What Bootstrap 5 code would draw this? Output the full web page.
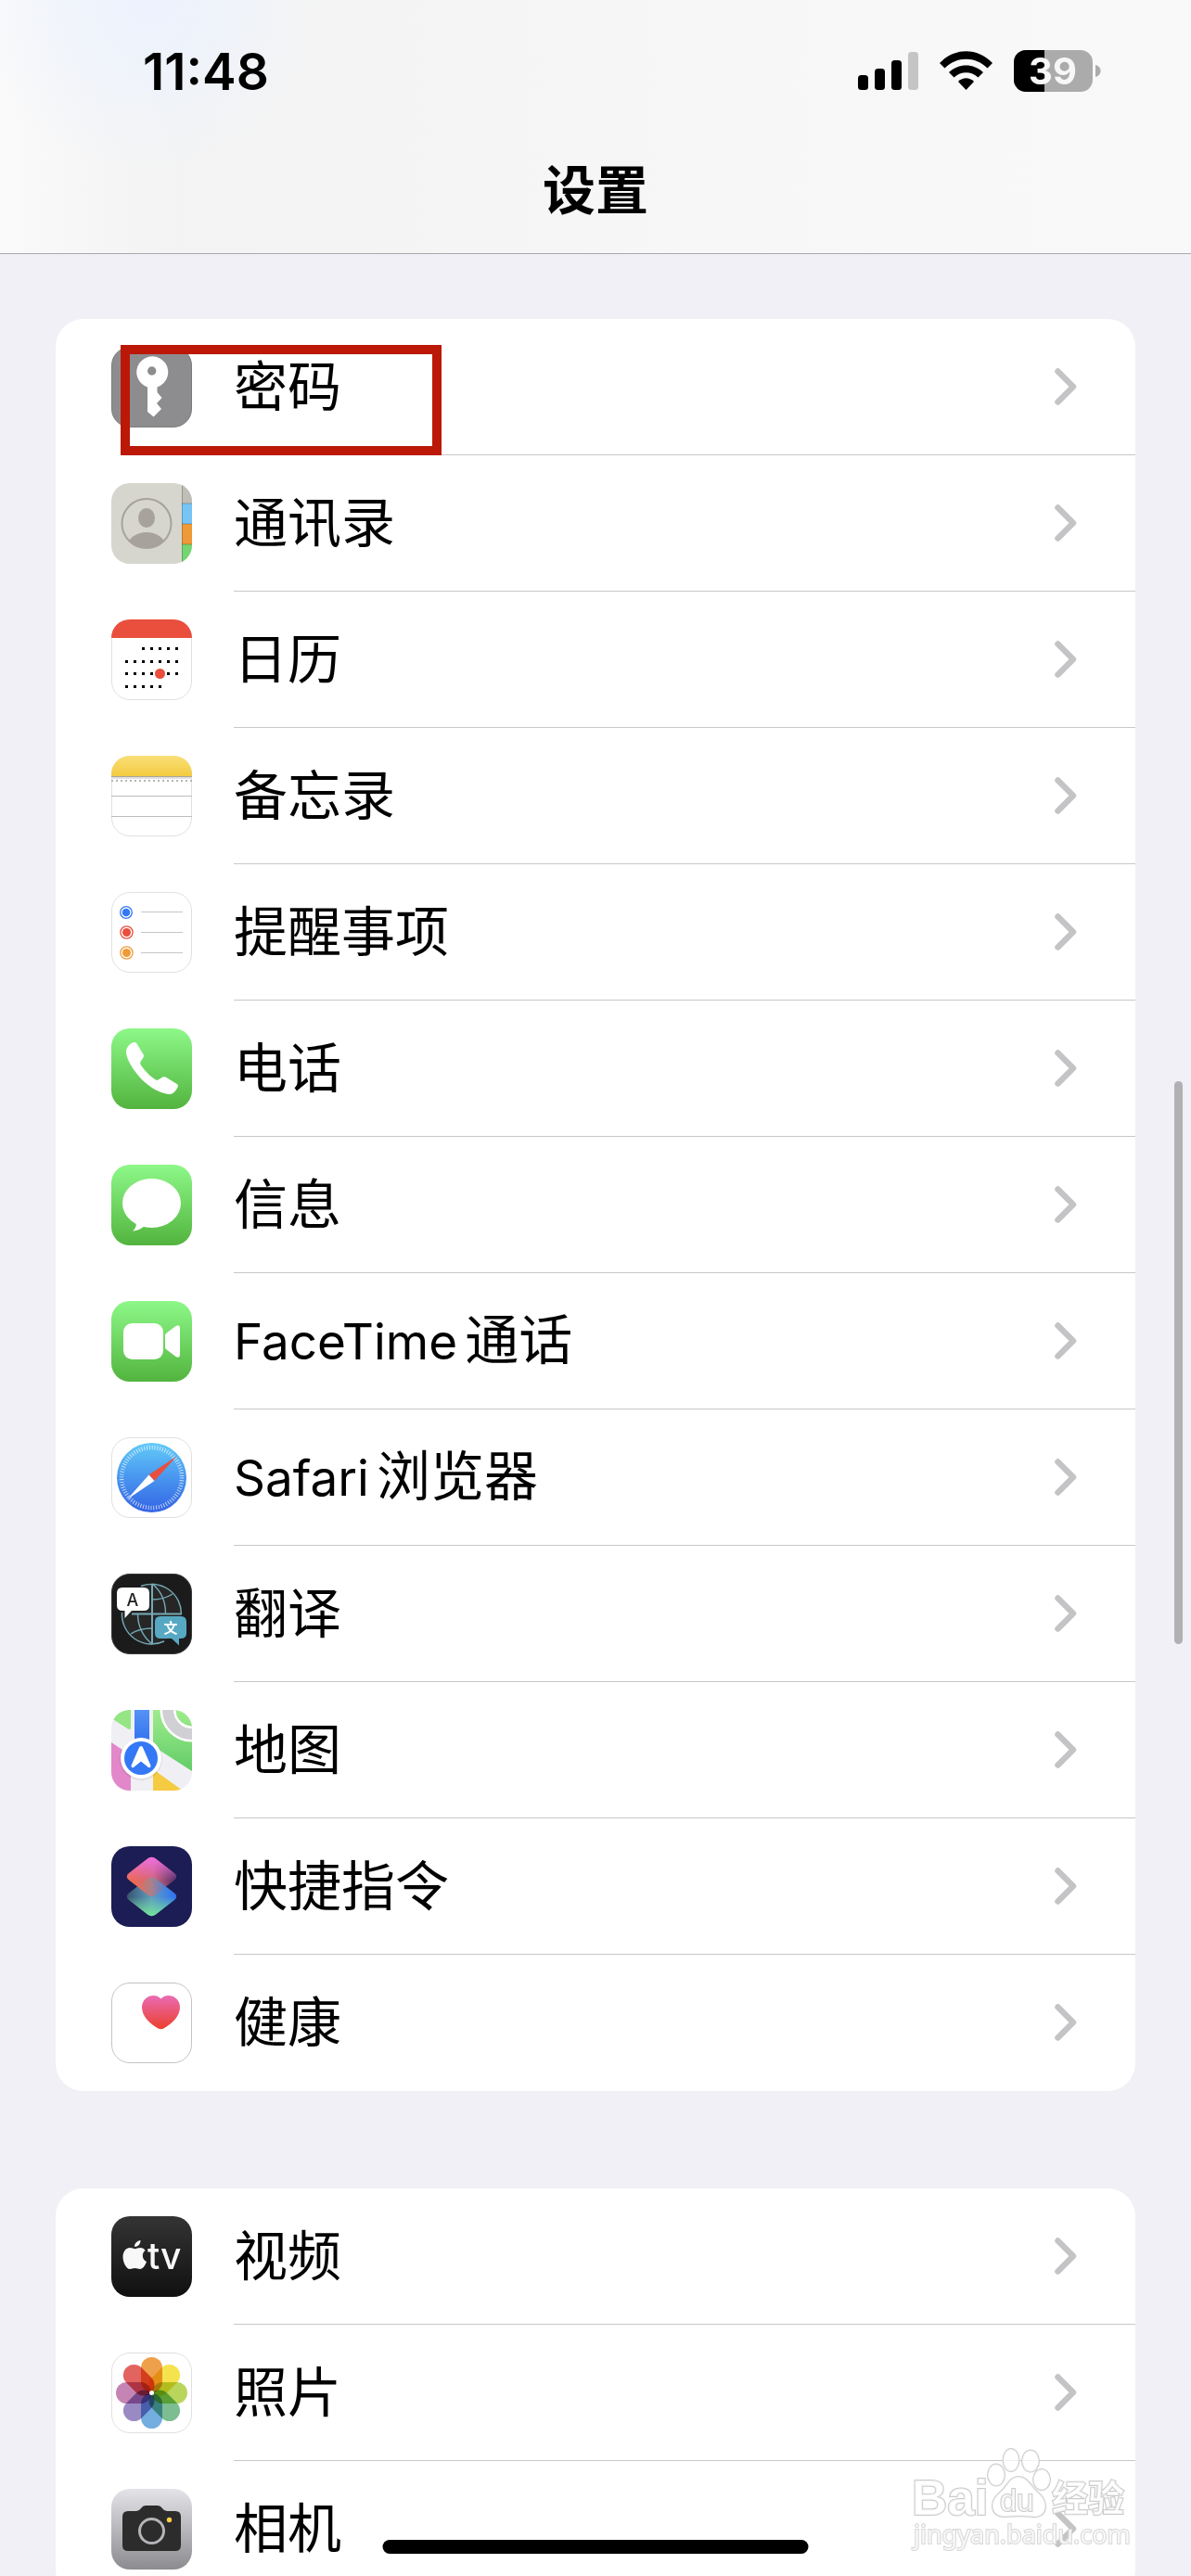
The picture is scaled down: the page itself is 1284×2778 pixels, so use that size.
<!DOCTYPE html>
<html lang="zh-CN">
<head>
<meta charset="utf-8">
<meta name="viewport" content="width=device-width, initial-scale=1">
<title>设置</title>
<link href="https://cdn.jsdelivr.net/npm/bootstrap@5.3.0/dist/css/bootstrap.min.css" rel="stylesheet">
<style>
  body { font-family: Inter, "Noto Sans CJK SC", sans-serif; background: #f0f0f6; color: #000; }
  .top-area { background: radial-gradient(circle 190px at 160px 0, #ecf2fe, rgba(238,243,252,0) 100%), linear-gradient(90deg, #fafafa 0, #f3f3f3 190px, #f7f7f7 760px, #f9f9f9 100%); border-bottom: 1px solid #a9a9ab; }
  .status-row { height: 154px; padding: 0 97px 0 154px; }
  .clock { font-size: 55px; line-height: 64px; font-weight: 600; }
  .page-title { font-size: 57px; line-height: 104px; font-weight: 700; padding-bottom: 15px; }
  .page-body { padding: 70px 60px 0; }
  .settings-card { border-radius: 30px; margin-bottom: 105px; overflow: hidden; background: #fff; }
  .settings-row { height: 147px; padding-left: 60px; color: #000; }
  .settings-row svg.app { width: 87px; height: 87px; margin-right: 45px; }
  .row-main { height: 147px; border-bottom: 1px solid #c8c8ca; padding-right: 63px; font-size: 58px; line-height: 80px; }
  .settings-row:last-child .row-main { border-bottom-color: transparent; }
  .latin { font-size: 53px; margin-right: 8px; }
  .scroll-thumb { right: 9px; top: 1166px; width: 9px; height: 607px; border-radius: 5px; background: #b1b1b3; }
  .home-bar { bottom: 24px; width: 459px; height: 15px; border-radius: 8px; background: #000; }
  .frame-note { left: 130px; top: 372px; width: 346px; height: 119px; border: 10px solid #bb1807; }
  .watermark { right: 64px; bottom: 20px; width: 240px; height: 124px; }
</style>
</head>
<body>
<svg width="0" height="0" class="position-absolute" aria-hidden="true">
  <defs>
    <linearGradient id="green" x1="0" y1="0" x2="0" y2="1"><stop offset="0" stop-color="#8df888"/><stop offset="1" stop-color="#52b43e"/></linearGradient>
    <clipPath id="tile"><rect width="87" height="87" rx="20"/></clipPath>
    <symbol id="chev" viewBox="0 0 24 40"><path d="M3.500 3.500L20 20L3.500 36.500" fill="none" stroke="#c4c4c6" stroke-width="6.500" stroke-linecap="round" stroke-linejoin="round"/></symbol>
  </defs>
</svg>

<div class="vh-100 d-flex flex-column overflow-hidden position-relative">
  <header class="top-area flex-shrink-0">
    <div class="status-row d-flex align-items-center justify-content-between">
      <span class="clock">11:48</span>
      <svg width="262" height="46" viewBox="0 0 262 46" aria-hidden="true">
        <g><rect x="0" y="27" width="11" height="16" rx="3.500"/><rect x="18" y="20" width="11" height="23" rx="3.500"/><rect x="36" y="11" width="11" height="32" rx="3.500"/><rect x="54" y="2" width="11" height="41" rx="3.500" fill="#c5c5c5"/></g>
        <path d="M88 14C104-3 129-3 145 14L139.500 19.500C126.500 6.500 106.500 6.500 93.500 19.500Z"/>
        <path d="M98 24C108.500 14 124.500 14 135 24L129.500 29.500C122 22.500 111 22.500 103.500 29.500Z"/>
        <path d="M108 34C113 29 120 29 125 34L116.500 43Z"/>
        <clipPath id="batt"><rect x="168" y="0" width="85" height="45" rx="13"/></clipPath>
        <g clip-path="url(#batt)"><rect x="168" width="85" height="45" fill="#ababab"/><rect x="168" width="33" height="45" fill="#000"/></g>
        <path d="M256 16C263.500 18 263.500 27 256 29Z" fill="#ababab"/>
        <text x="210" y="37" text-anchor="middle" font-family="Inter, sans-serif" font-weight="700" font-size="40" fill="#f7f7f7">39</text>
      </svg>
    </div>
    <h1 class="page-title text-center m-0">设置</h1>
  </header>

  <main class="page-body flex-grow-1 overflow-hidden">
    <nav class="settings-card" aria-label="应用设置">
      <a href="#" class="settings-row d-flex align-items-center text-decoration-none">
        <svg class="app flex-shrink-0" viewBox="0 0 87 87"><rect x=".5" y=".5" width="86" height="86" rx="19.500" fill="#8d8d90" stroke="#7c7c7f"/><path d="M39 44V70L45.500 75.500L54 67L49 61L54.500 55L49.500 49V43.500A17 17 0 1 0 39 43.500Z" fill="#fff"/><circle cx="43.700" cy="26" r="4.700" fill="#8d8d90"/></svg>
        <span class="row-main flex-grow-1 d-flex align-items-center justify-content-between"><span>密码</span><svg width="24" height="40"><use href="#chev"/></svg></span>
      </a>
      <a href="#" class="settings-row d-flex align-items-center text-decoration-none">
        <svg class="app flex-shrink-0" viewBox="0 0 87 87"><g clip-path="url(#tile)"><rect width="87" height="87" fill="#d6d6ce"/><rect x="76" width="11" height="22" fill="#bfbfb7"/><rect x="76" y="22" width="11" height="22" fill="#77c4f5"/><rect x="76" y="44" width="11" height="22" fill="#ee9a38"/><rect x="76" y="66" width="11" height="21" fill="#75d572"/><path d="M76 22H87M76 44H87M76 66H87M76.500 0V87" stroke="#000" stroke-opacity=".22"/></g><clipPath id="cc"><circle cx="38" cy="43.500" r="26.500"/></clipPath><circle cx="38" cy="43.500" r="26.500" fill="none" stroke="#a7a29c" stroke-width="2"/><ellipse cx="38" cy="37.500" rx="9" ry="10.500" fill="#a7a29c"/><ellipse cx="38" cy="69" rx="21" ry="16" fill="#a7a29c" clip-path="url(#cc)"/></svg>
        <span class="row-main flex-grow-1 d-flex align-items-center justify-content-between"><span>通讯录</span><svg width="24" height="40"><use href="#chev"/></svg></span>
      </a>
      <a href="#" class="settings-row d-flex align-items-center text-decoration-none">
        <svg class="app flex-shrink-0" viewBox="0 0 87 87"><rect x=".5" y=".5" width="86" height="86" rx="19.500" fill="#fff" stroke="#e0e0e0"/><rect width="87" height="20" fill="#ea4e3d" clip-path="url(#tile)"/><g stroke="#000" stroke-width="3" stroke-dasharray="3 6"><path d="M33 31.500H72M15 45.500H72M15 58.500H72M15 72.500H54"/></g><circle cx="52.500" cy="58.500" r="5.500" fill="#ea4e3d"/></svg>
        <span class="row-main flex-grow-1 d-flex align-items-center justify-content-between"><span>日历</span><svg width="24" height="40"><use href="#chev"/></svg></span>
      </a>
      <a href="#" class="settings-row d-flex align-items-center text-decoration-none">
        <svg class="app flex-shrink-0" viewBox="0 0 87 87"><linearGradient id="yel" x1="0" y1="0" x2="0" y2="1"><stop offset="0" stop-color="#f9df78"/><stop offset="1" stop-color="#f4cb40"/></linearGradient><rect x=".5" y=".5" width="86" height="86" rx="19.500" fill="#fff" stroke="#e0e0e0"/><rect width="87" height="22" fill="url(#yel)" clip-path="url(#tile)"/><path d="M0 22.500H87" stroke="#aaa69a"/><path d="M0 24H87" stroke="#e0e0e0" stroke-width="2"/><path d="M0 27H87" stroke="#b4b4b4" stroke-width="2" stroke-dasharray="2 3"/><path d="M0 43.500H87M0 65.500H87" stroke="#bdbdbd"/></svg>
        <span class="row-main flex-grow-1 d-flex align-items-center justify-content-between"><span>备忘录</span><svg width="24" height="40"><use href="#chev"/></svg></span>
      </a>
      <a href="#" class="settings-row d-flex align-items-center text-decoration-none">
        <svg class="app flex-shrink-0" viewBox="0 0 87 87"><rect x=".5" y=".5" width="86" height="86" rx="19.500" fill="#fff" stroke="#e0e0e0"/><path d="M32 21.500H77M32 43.500H77M32 65.500H77" stroke="#c6c6c6"/><g fill="none" stroke-width="1.300"><circle cx="16" cy="22" r="6.300" stroke="#3478f6"/><circle cx="16.500" cy="43.500" r="6.600" stroke="#ea4e3d"/><circle cx="16.500" cy="65.500" r="6.600" stroke="#f09a37"/></g><circle cx="16" cy="22" r="4.300" fill="#3478f6"/><circle cx="16.500" cy="43.500" r="4.500" fill="#ea4e3d"/><circle cx="16.500" cy="65.500" r="4.500" fill="#f09a37"/></svg>
        <span class="row-main flex-grow-1 d-flex align-items-center justify-content-between"><span>提醒事项</span><svg width="24" height="40"><use href="#chev"/></svg></span>
      </a>
      <a href="#" class="settings-row d-flex align-items-center text-decoration-none">
        <svg class="app flex-shrink-0" viewBox="0 0 87 87"><rect width="87" height="87" rx="20" fill="url(#green)"/><path d="M25 15C21 15.500 16 20 16 25C16 35 28 51 36 58C45 66 56 71 63 71C67 71 71 66 72 62C72 61 71 60 70 59.500L58.500 52.500C57.500 52 56.500 52 55.500 52.500L50.500 55.500C49.500 56 48.500 56 47.500 55.300C41 51 35 44.500 31.500 39C31 38 31 37 31.500 36L34.700 31C35.300 30 35 29 34.500 28L27.500 16.500C27 15.500 26 14.900 25 15Z" fill="#fff"/></svg>
        <span class="row-main flex-grow-1 d-flex align-items-center justify-content-between"><span>电话</span><svg width="24" height="40"><use href="#chev"/></svg></span>
      </a>
      <a href="#" class="settings-row d-flex align-items-center text-decoration-none">
        <svg class="app flex-shrink-0" viewBox="0 0 87 87"><rect width="87" height="87" rx="20" fill="url(#green)"/><ellipse cx="43.500" cy="41.500" rx="31.500" ry="26.500" fill="#fff"/><path d="M26 61C28 65 26 69 23 71.500C28 71.500 32 69 36 66Z" fill="#fff"/></svg>
        <span class="row-main flex-grow-1 d-flex align-items-center justify-content-between"><span>信息</span><svg width="24" height="40"><use href="#chev"/></svg></span>
      </a>
      <a href="#" class="settings-row d-flex align-items-center text-decoration-none">
        <svg class="app flex-shrink-0" viewBox="0 0 87 87"><rect width="87" height="87" rx="20" fill="url(#green)"/><rect x="13" y="24" width="43" height="39" rx="9.500" fill="#fff"/><path d="M58 37.500Q58 36 59 35L69.500 27Q74 25 74 29V58Q74 62 69.500 60L59 52Q58 51 58 49.500Z" fill="#fff"/></svg>
        <span class="row-main flex-grow-1 d-flex align-items-center justify-content-between"><span><span class="latin">FaceTime</span>通话</span><svg width="24" height="40"><use href="#chev"/></svg></span>
      </a>
      <a href="#" class="settings-row d-flex align-items-center text-decoration-none">
        <svg class="app flex-shrink-0" viewBox="0 0 87 87"><linearGradient id="saf" x1="0" y1="0" x2="0" y2="1"><stop offset="0" stop-color="#62cbf8"/><stop offset=".55" stop-color="#4690ee"/><stop offset="1" stop-color="#3464e4"/></linearGradient><rect x=".5" y=".5" width="86" height="86" rx="19.500" fill="#fff" stroke="#e0e0e0"/><circle cx="43.500" cy="43.500" r="37.500" fill="url(#saf)"/><circle cx="43.500" cy="43.500" r="32.500" fill="none" stroke="#fff" stroke-opacity=".75" stroke-width="4.500" stroke-dasharray="0.900 1.936"/><path d="M70.500 20.500L40.500 40.500L46.500 47Z" fill="#ea4e3d"/><path d="M17 67L40.500 40.500L46.500 47Z" fill="#fff"/></svg>
        <span class="row-main flex-grow-1 d-flex align-items-center justify-content-between"><span><span class="latin">Safari</span>浏览器</span><svg width="24" height="40"><use href="#chev"/></svg></span>
      </a>
      <a href="#" class="settings-row d-flex align-items-center text-decoration-none">
        <svg class="app flex-shrink-0" viewBox="0 0 87 87"><rect x=".5" y=".5" width="86" height="86" rx="19.500" fill="#1b1b1b" stroke="#3a3a3a"/><circle cx="43.500" cy="43.500" r="32" fill="#262626"/><g fill="none" stroke="#77a9b6" stroke-width="1.400"><path d="M32 13.500A32 32 0 0 1 75.500 43.500M57 73A32 32 0 0 1 11.500 42"/><path d="M44 11C54 19 58.500 30 58.500 43M44 76C33 67 28.500 56 28.500 43M44 28C52 28 60 26 66 22M44 59C35 59 27 61 21 65"/><path d="M44 11V76M22 43.500H76" stroke-width="2"/></g><path d="M12 15H35Q41 15 41 21V34Q41 40 35 40H22L14.500 48V40H12Q6 40 6 34V21Q6 15 12 15Z" fill="#fff"/><path d="M53 46H75Q81 46 81 52V64Q81 70 75 70H73V77.500L65 70H53Q47 70 47 64V52Q47 46 53 46Z" fill="#57a9c3"/><text x="23" y="34.500" text-anchor="middle" font-family="Inter, sans-serif" font-size="18" font-weight="500" fill="#222">A</text><text x="64" y="64" text-anchor="middle" font-family="Noto Sans CJK SC, sans-serif" font-size="15" font-weight="700" fill="#fff">文</text></svg>
        <span class="row-main flex-grow-1 d-flex align-items-center justify-content-between"><span>翻译</span><svg width="24" height="40"><use href="#chev"/></svg></span>
      </a>
      <a href="#" class="settings-row d-flex align-items-center text-decoration-none">
        <svg class="app flex-shrink-0" viewBox="0 0 87 87"><linearGradient id="mg" x1="0" y1="0" x2="0" y2="1"><stop offset="0" stop-color="#9fec8c"/><stop offset="1" stop-color="#62cc68"/></linearGradient><linearGradient id="mb" x1="0" y1="0" x2="0" y2="1"><stop offset="0" stop-color="#5593f4"/><stop offset="1" stop-color="#2d6cf2"/></linearGradient><g clip-path="url(#tile)"><rect width="87" height="87" fill="#f0f0f4"/><path d="M0 0H21V19Q21 22 18 20.500L0 9Z" fill="#94e584"/><path d="M45 0H87V66L45 39Z" fill="url(#mg)"/><path d="M0 35L21 49V87H0Z" fill="#e287c9"/><path d="M45 64L77 87H45Z" fill="#f5cb42"/><circle cx="87" cy="0" r="26" fill="none" stroke="#fff" stroke-width="17"/><circle cx="87" cy="0" r="26" fill="none" stroke="#cfcfd4" stroke-width="12"/><rect x="25" width="16" height="40" fill="url(#mb)"/></g><circle cx="32" cy="53" r="23" fill="#000" opacity=".07"/><circle cx="32" cy="52" r="22" fill="#fff"/><circle cx="32" cy="52" r="18" fill="#3478f6"/><path d="M32 39Q33.500 39 34 40.500L42.500 60Q42.500 63 40 62L32 55.500L24 62Q21.500 63 21.500 60L30 40.500Q30.500 39 32 39Z" fill="#fff"/></svg>
        <span class="row-main flex-grow-1 d-flex align-items-center justify-content-between"><span>地图</span><svg width="24" height="40"><use href="#chev"/></svg></span>
      </a>
      <a href="#" class="settings-row d-flex align-items-center text-decoration-none">
        <svg class="app flex-shrink-0" viewBox="0 0 87 87"><linearGradient id="s1" x1=".1" y1=".6" x2="1" y2=".5"><stop offset="0" stop-color="#ec6a52"/><stop offset=".5" stop-color="#d0647e"/><stop offset="1" stop-color="#4a2d66"/></linearGradient><linearGradient id="s1t" x1="0" y1="0" x2="0" y2="1"><stop offset="0" stop-color="#ee6fe0"/><stop offset=".6" stop-color="#ee6fe0" stop-opacity="0"/></linearGradient><linearGradient id="s2" x1="0" y1=".5" x2="1" y2=".5"><stop offset="0" stop-color="#37536f"/><stop offset=".5" stop-color="#5f9fc0"/><stop offset="1" stop-color="#2e6ff5"/></linearGradient><linearGradient id="s2b" x1="0" y1="0" x2="0" y2="1"><stop offset=".5" stop-color="#75e39a" stop-opacity="0"/><stop offset="1" stop-color="#75e39a"/></linearGradient><linearGradient id="s3" x1="0" y1="0" x2="1" y2="0"><stop offset="0" stop-color="#e56c58"/><stop offset=".5" stop-color="#a9808c"/><stop offset="1" stop-color="#4a80d8"/></linearGradient><rect width="87" height="87" rx="20" fill="#1b1d54"/><path d="M39 35Q43.500 32 48 35L68 50.500Q72.500 54 68 58L48 73.500Q43.500 77 39 73.500L19 58Q14.500 54 19 50.500Z" fill="url(#s2)"/><path d="M39 35Q43.500 32 48 35L68 50.500Q72.500 54 68 58L48 73.500Q43.500 77 39 73.500L19 58Q14.500 54 19 50.500Z" fill="url(#s2b)"/><path d="M39 13.500Q43.500 10 48 13.500L68 29Q72.500 32.500 68 36.500L48 52Q43.500 56 39 52L19 36.500Q14.500 32.500 19 29Z" fill="url(#s1)"/><path d="M39 13.500Q43.500 10 48 13.500L68 29Q72.500 32.500 68 36.500L48 52Q43.500 56 39 52L19 36.500Q14.500 32.500 19 29Z" fill="url(#s1t)"/><path d="M39 35Q43.500 32 48 35L59 43.500L48 52Q43.500 56 39 52L28 43.500Z" fill="url(#s3)"/></svg>
        <span class="row-main flex-grow-1 d-flex align-items-center justify-content-between"><span>快捷指令</span><svg width="24" height="40"><use href="#chev"/></svg></span>
      </a>
      <a href="#" class="settings-row d-flex align-items-center text-decoration-none">
        <svg class="app flex-shrink-0" viewBox="0 0 87 87"><linearGradient id="hh" x1="0" y1="0" x2="0" y2="1"><stop offset="0" stop-color="#ea6bb5"/><stop offset="1" stop-color="#ec402b"/></linearGradient><rect x=".5" y=".5" width="86" height="86" rx="19.500" fill="#fff" stroke="#c4c4c4"/><path d="M53.500 17.500C50 13.500 45 13.500 42 14.500C36 16.500 33 21 33 27C33 36 42 45 50.500 49.500Q53.500 51 56.500 49.500C65 45 74 36 74 27C74 21 71 16.500 65 14.500C62 13.500 57 13.500 53.500 17.500Z" fill="url(#hh)"/></svg>
        <span class="row-main flex-grow-1 d-flex align-items-center justify-content-between"><span>健康</span><svg width="24" height="40"><use href="#chev"/></svg></span>
      </a>
    </nav>

    <nav class="settings-card" aria-label="媒体设置">
      <a href="#" class="settings-row d-flex align-items-center text-decoration-none">
        <svg class="app flex-shrink-0" viewBox="0 0 87 87"><linearGradient id="tvb" x1="0" y1="0" x2="0" y2="1"><stop offset="0" stop-color="#343434"/><stop offset="1" stop-color="#101010"/></linearGradient><rect width="87" height="87" rx="20" fill="url(#tvb)"/><path d="M31.500 26C31.500 30 29 33 25 33C25 29 28 26.500 31.500 26ZM36.500 37C32.500 40 33 46.500 38 49C36.500 53 34 57 31 57C29 57 28 56 25.500 56C23 56 22 57 20 57C16 57 12.500 49.500 12.500 44C12.500 38 16 34 20 34C22.500 34 24 35.200 25.500 35.200C27 35.200 29 34 31.500 34C33.500 34 35.500 35 36.500 37Z" fill="#f8f8f8"/><text x="39" y="57" font-family="Inter, sans-serif" font-size="39" font-weight="500" fill="#f8f8f8">tv</text></svg>
        <span class="row-main flex-grow-1 d-flex align-items-center justify-content-between"><span>视频</span><svg width="24" height="40"><use href="#chev"/></svg></span>
      </a>
      <a href="#" class="settings-row d-flex align-items-center text-decoration-none">
        <svg class="app flex-shrink-0" viewBox="0 0 87 87"><rect x=".5" y=".5" width="86" height="86" rx="19.500" fill="#fff" stroke="#e0e0e0"/>
          <g style="isolation:isolate"><g style="mix-blend-mode:multiply"><rect x="32" y="5" width="23" height="38" rx="11.500" fill="#efa04a"/></g><g style="mix-blend-mode:multiply"><rect x="32" y="5" width="23" height="38" rx="11.500" fill="#f5e34e" transform="rotate(45 43.500 43.500)"/></g><g style="mix-blend-mode:multiply"><rect x="32" y="5" width="23" height="38" rx="11.500" fill="#b9d55c" transform="rotate(90 43.500 43.500)"/></g><g style="mix-blend-mode:multiply"><rect x="32" y="5" width="23" height="38" rx="11.500" fill="#7cbd92" transform="rotate(135 43.500 43.500)"/></g><g style="mix-blend-mode:multiply"><rect x="32" y="5" width="23" height="38" rx="11.500" fill="#74ade0" transform="rotate(180 43.500 43.500)"/></g><g style="mix-blend-mode:multiply"><rect x="32" y="5" width="23" height="38" rx="11.500" fill="#9a8ac4" transform="rotate(225 43.500 43.500)"/></g><g style="mix-blend-mode:multiply"><rect x="32" y="5" width="23" height="38" rx="11.500" fill="#c585b4" transform="rotate(270 43.500 43.500)"/></g><g style="mix-blend-mode:multiply"><rect x="32" y="5" width="23" height="38" rx="11.500" fill="#e2635f" transform="rotate(315 43.500 43.500)"/></g></g><circle cx="43.500" cy="43.500" r="2.500" fill="#fff"/></svg>
        <span class="row-main flex-grow-1 d-flex align-items-center justify-content-between"><span>照片</span><svg width="24" height="40"><use href="#chev"/></svg></span>
      </a>
      <a href="#" class="settings-row d-flex align-items-center text-decoration-none">
        <svg class="app flex-shrink-0" viewBox="0 0 87 87"><linearGradient id="cam" x1="0" y1="0" x2="0" y2="1"><stop offset="0" stop-color="#e4e4e8"/><stop offset="1" stop-color="#8c8c90"/></linearGradient><rect width="87" height="87" rx="20" fill="url(#cam)"/><path d="M18 24H27Q30 24 32 21Q34 18 37 18H50Q53 18 55 21Q57 24 60 24H69Q75 24 75 30V61Q75 67 69 67H18Q12 67 12 61V30Q12 24 18 24Z" fill="#2c2c2c"/><circle cx="43.500" cy="45.500" r="13" fill="none" stroke="#b3b3b8" stroke-width="3"/><circle cx="62.500" cy="33.500" r="2.700" fill="#f7cf46"/></svg>
        <span class="row-main flex-grow-1 d-flex align-items-center justify-content-between"><span>相机</span><svg width="24" height="40"><use href="#chev"/></svg></span>
      </a>
    </nav>
  </main>

  <div class="frame-note position-absolute"></div>
  <div class="scroll-thumb position-absolute"></div>
  <div class="home-bar position-absolute start-50 translate-middle-x"></div>
  <svg class="watermark position-absolute" viewBox="0 0 240 124" aria-label="Baidu经验 jingyan.baidu.com">
    <g fill="#fff" fill-opacity=".75" stroke="#cbcbcb" stroke-width="2" paint-order="stroke">
      <text x="3" y="78" font-family="Liberation Sans, sans-serif" font-weight="700" font-size="53">Bai</text>
      <ellipse cx="94" cy="35" rx="9" ry="11.500"/><ellipse cx="110" cy="19" rx="8.500" ry="12"/><ellipse cx="131" cy="20" rx="9" ry="11.500"/><ellipse cx="143" cy="40" rx="9" ry="11"/>
      <path d="M118 37C126 37 130 44 135 50C141 56 147 60 147 69C147 77 141 81 133 80C126 79 111 79 104 80C95 80 90 76 90 68C90 60 96 56 102 50C107 44 110 37 118 37Z"/>
      <text x="98" y="74" font-family="Liberation Sans, sans-serif" font-size="33">du</text>
      <text x="154" y="74" font-family="Noto Sans CJK SC, sans-serif" font-weight="700" font-size="39">经验</text>
      <text x="5" y="109" font-family="Noto Sans, sans-serif" font-size="27" stroke="#d8d8d8">jingyan.baidu.com</text>
    </g>
  </svg>
</div>
<script src="https://cdn.jsdelivr.net/npm/bootstrap@5.3.0/dist/js/bootstrap.bundle.min.js"></script>
</body>
</html>
